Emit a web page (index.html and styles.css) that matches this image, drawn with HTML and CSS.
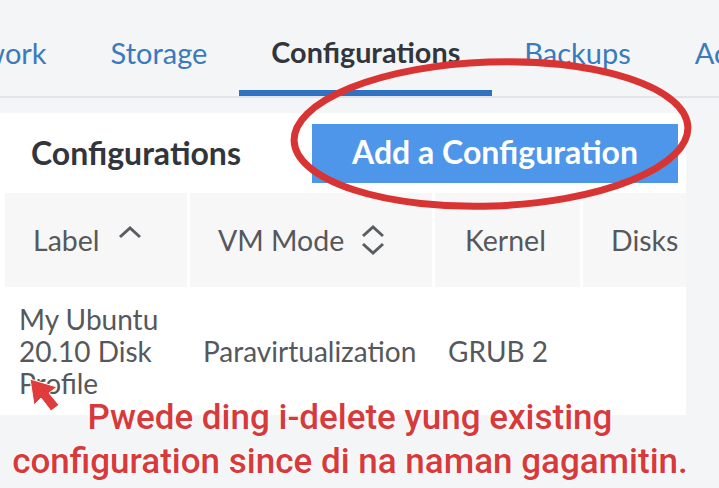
FILE: index.html
```html
<!DOCTYPE html>
<html>
<head>
<meta charset="utf-8">
<link rel="stylesheet" href="styles.css">
</head>
<body>
<div class="page">
  <nav class="tabs">
    <a class="tab">Network</a>
    <a class="tab">Storage</a>
    <a class="tab active">Configurations</a>
    <a class="tab">Backups</a>
    <a class="tab">Activity Feed</a>
  </nav>
  <section class="panel">
    <div class="panel-head">
      <h2 class="title">Configurations</h2>
      <button class="add-btn">Add a Configuration</button>
    </div>
    <div class="table">
      <div class="th c1">Label
        <svg class="sort" width="26" height="14" viewBox="0 0 26 14"><path d="M3 12 L13 3 L23 12" fill="none" stroke="#5a5d62" stroke-width="3"/></svg>
      </div>
      <div class="th c2">VM Mode
        <svg class="sort2" width="26" height="32" viewBox="0 0 26 32"><path d="M3 12 L13 3 L23 12 M3 20 L13 29 L23 20" fill="none" stroke="#5a5d62" stroke-width="3"/></svg>
      </div>
      <div class="th c3">Kernel</div>
      <div class="th c4">Disks</div>
      <div class="td c1">My Ubuntu 20.10 Disk Profile</div>
      <div class="td c2">Paravirtualization</div>
      <div class="td c3">GRUB 2</div>
      <div class="td c4"></div>
    </div>
  </section>

  <svg class="overlay" width="719" height="488" viewBox="0 0 719 488">
    <ellipse cx="491" cy="134" rx="197" ry="72" fill="none" stroke="#d83434" stroke-width="7" transform="rotate(-2 491 134)"/>
    <polygon points="30,379 34,405 41,398 51,411 59,405 49,393 57,387" fill="#e03c3c" stroke="#fff" stroke-width="1"/>
  </svg>
  <div class="note">Pwede ding i-delete yung existing<br>configuration since di na naman gagamitin.</div>
</div>
</body>
</html>
```

FILE: styles.css
```css
* { box-sizing: border-box; }
html, body { margin: 0; padding: 0; }
body {
  background: #f4f5f7;
  font-family: Lato, "Open Sans", sans-serif;
  width: 719px;
  height: 488px;
  overflow: hidden;
}
.page {
  position: relative;
  width: 719px;
  height: 488px;
  overflow: hidden;
}
.tabs {
  display: flex;
  height: 98px;
  border-bottom: 2px solid #e3e4e7;
  margin-left: -97px;
  white-space: nowrap;
}
.tab {
  display: flex;
  align-items: center;
  height: 96px;
  padding: 14px 32px 0;
  font-size: 29px;
  color: #3a7bbd;
  border-bottom: 6px solid transparent;
}
.tab.active {
  color: #32363c;
  font-weight: 700;
  font-size: 28.8px;
  border-bottom-color: #2f72c4;
}
.panel {
  margin-top: 15px;
  width: 686px;
  background: #fff;
}
.panel-head {
  display: flex;
  align-items: center;
  justify-content: space-between;
  padding: 11px 8px 10px 31px;
}
.title {
  margin: 0;
  font-size: 32px;
  font-weight: 700;
  color: #32363c;
  margin-top: -3px;
}
.add-btn {
  width: 366px;
  height: 59px;
  border: 0;
  background: #4d96ea;
  color: #fff;
  font-family: Lato, sans-serif;
  font-size: 32px;
  font-weight: 700;
  padding: 0 0 4px;
}
.table {
  display: grid;
  grid-template-columns: 187px 245px 148px 106px;
}
.th {
  height: 94px;
  display: flex;
  align-items: center;
  padding-left: 28px;
  background: #f7f7f8;
  border-left: 3px solid #fff;
  font-size: 28.5px;
  color: #55585c;
  white-space: nowrap;
  overflow: hidden;
}
.th.c1 { border-left-width: 5px; }
.th.c3 { padding-left: 30px; }
.sort { margin-left: 17px; margin-top: -16px; }
.sort2 { margin-left: 16px; }
.td {
  height: 128px;
  display: flex;
  align-items: center;
  padding: 0 16px;
  font-size: 28px;
  line-height: 32px;
  color: #55585c;
}
.td.c1 { padding-left: 19px; padding-right: 12px; }
.overlay {
  position: absolute;
  left: 0;
  top: 0;
  pointer-events: none;
}
.note {
  position: absolute;
  left: 0;
  top: 396px;
  width: 700px;
  text-align: center;
  font-family: Roboto, "Liberation Sans", sans-serif;
  font-weight: 500;
  font-size: 35px;
  line-height: 44px;
  color: #d8393b;
  text-shadow: 0 0 2px #fff, 0 0 2px #fff, 0 0 3px #fff;
}
```
